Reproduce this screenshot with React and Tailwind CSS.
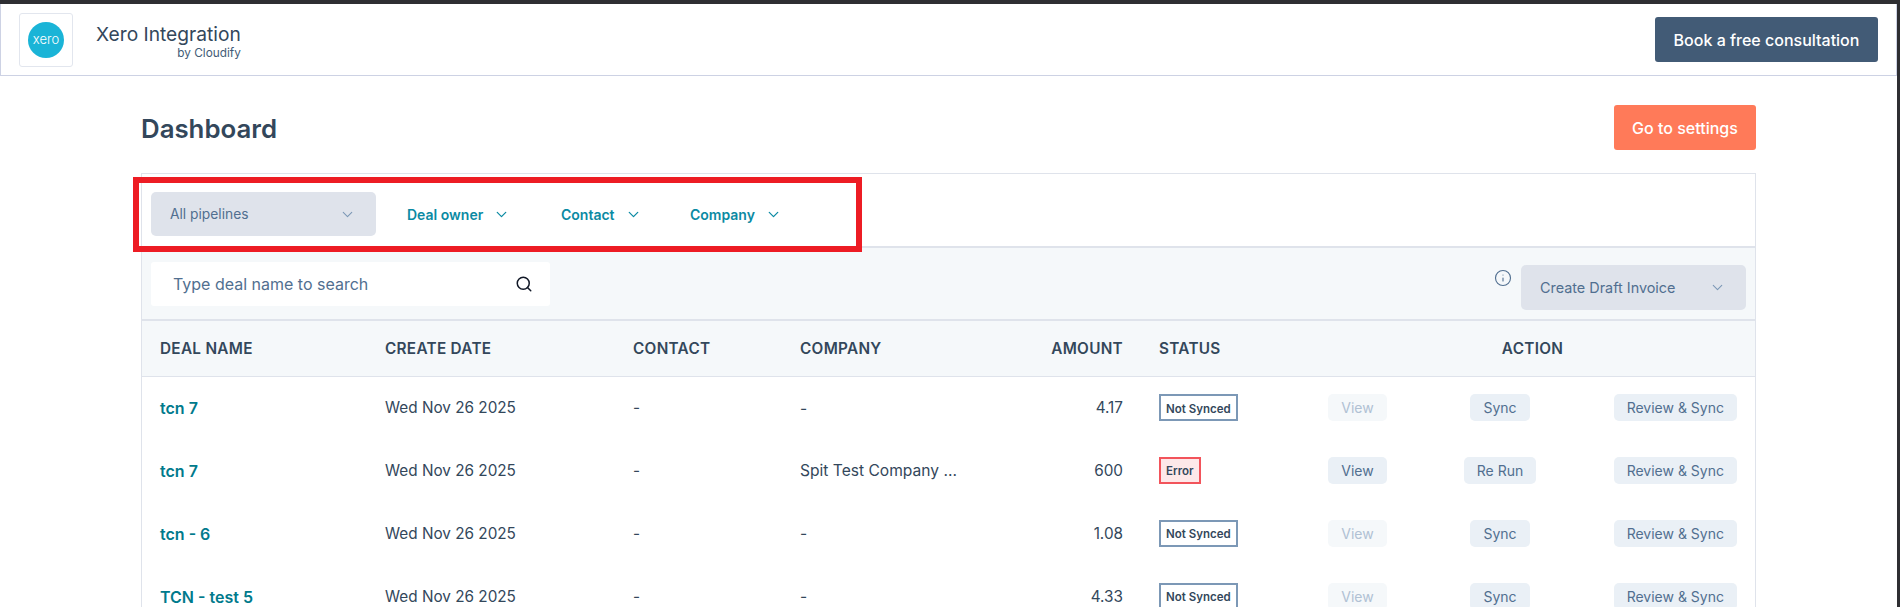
import { ChevronDown, Info, Search } from 'lucide-react';

const deals = [
  { name: 'tcn 7', company: '-', amount: '4.17', status: 'Not Synced', viewOff: true, run: 'Sync' },
  { name: 'tcn 7', company: 'Spit Test Company ...', amount: '600', status: 'Error', viewOff: false, run: 'Re Run' },
  { name: 'tcn - 6', company: '-', amount: '1.08', status: 'Not Synced', viewOff: true, run: 'Sync' },
  { name: 'TCN - test 5', company: '-', amount: '4.33', status: 'Not Synced', viewOff: true, run: 'Sync' },
];

function StatusTag({ status }) {
  if (status === 'Error') {
    return (
      <span className="inline-flex h-[27px] items-center border-2 border-[#f2545b] bg-[#fde8e9] px-[5px] pt-[3px] text-[11.5px] font-semibold text-[#33475b]">
        {status}
      </span>
    );
  }
  return (
    <span className="inline-flex h-[27px] items-center border-2 border-[#7c98b6] bg-white px-[5px] pt-[3px] text-[11.5px] font-semibold text-[#33475b]">
      {status}
    </span>
  );
}

function ActionButton({ children, off }) {
  return (
    <button
      type="button"
      className={
        off
          ? 'h-[27px] w-[59px] rounded-[5px] bg-[#f5f8fa] text-[14px] text-[#b0c1d4]'
          : 'h-[27px] min-w-[59px] rounded-[5px] bg-[#eaf0f6] px-[13px] text-[14px] text-[#516f90]'
      }
    >
      {children}
    </button>
  );
}

function FilterLink({ label, className }) {
  return (
    <button type="button" className={`flex items-center gap-[10px] text-[14px] font-semibold text-[#0b8aa3] ${className}`}>
      {label}
      <ChevronDown size={17} strokeWidth={1.75} />
    </button>
  );
}

export default function App() {
  return (
    <div className="h-[607px] overflow-hidden border-t-4 border-r-[3px] border-[#2e2e32] bg-white font-['Inter','Liberation_Sans',sans-serif] text-[#33475b]">
      <header className="flex h-[72px] items-center justify-between border-x border-b border-[#cdd2e4] pr-[18px] pl-[18px]">
        <div className="flex items-center gap-[23px]">
          <div className="flex h-[54px] w-[54px] items-center justify-center rounded-[3px] border border-[#e2e6ee]">
            <div className="flex h-[36px] w-[36px] items-center justify-center rounded-full bg-[#1ab4d7] text-[13px] font-light text-white">
              xero
            </div>
          </div>
          <div className="mt-[4px] flex flex-col items-end">
            <span className="text-[19.2px] leading-[23px] text-[#33475b]">Xero Integration</span>
            <span className="text-[11.8px] leading-[14px] text-[#425b76]">by Cloudify</span>
          </div>
        </div>
        <button type="button" className="h-[45px] w-[223px] rounded-[3px] bg-[#425b76] text-[16px] font-medium text-white">
          Book a free consultation
        </button>
      </header>

      <main className="mr-[141px] ml-[141px]">
        <div className="flex items-center justify-between pt-[29px] pb-[23px]">
          <h1 className="mt-[3px] text-[25.8px] font-semibold text-[#33475b]">Dashboard</h1>
          <button type="button" className="h-[45px] w-[142px] rounded-[3px] bg-[#ff7a59] text-[16px] font-medium text-white">
            Go to settings
          </button>
        </div>

        <section className="border border-[#dfe3eb]">
          <div className="relative flex h-[72px] items-center pt-[8px] pl-[9px]">
            <button type="button" className="flex h-[44px] w-[225px] items-center justify-between rounded-[5px] bg-[#dfe3eb] pr-[20px] pl-[19px] text-[13.8px] text-[#516f90]">
              All pipelines
              <ChevronDown size={17} strokeWidth={1.5} className="text-[#7c98b6]" />
            </button>
            <FilterLink label="Deal owner" className="ml-[31px] w-[154px]" />
            <FilterLink label="Contact" className="w-[129px]" />
            <FilterLink label="Company" />
            <div className="absolute top-[3px] left-[-9px] h-[75px] w-[729px] border-[6px] border-[#ed1c24]" />
          </div>

          <div className="flex h-[75px] items-center justify-between border-y-2 border-[#dfe3eb] bg-[#f5f8fa] pr-[9px] pl-[9px]">
            <div className="flex h-[44px] w-[399px] items-center justify-between rounded-[3px] bg-white pr-[17px] pl-[22px]">
              <span className="text-[16px] text-[#516f90]">Type deal name to search</span>
              <Search size={18} strokeWidth={2} className="text-[#111827]" />
            </div>
            <div className="mt-[8px] flex items-center gap-[9px]">
              <Info size={18} strokeWidth={1.5} className="mb-[20px] text-[#516f90]" />
              <button type="button" className="flex h-[45px] w-[225px] items-center justify-between rounded-[5px] bg-[#dfe3eb] pr-[20px] pl-[19px] text-[14.4px] text-[#516f90]">
                Create Draft Invoice
                <ChevronDown size={17} strokeWidth={1.5} className="text-[#7c98b6]" />
              </button>
            </div>
          </div>

          <table className="w-full table-fixed border-collapse">
            <colgroup>
              <col className="w-[225px]" />
              <col className="w-[248px]" />
              <col className="w-[167px]" />
              <col className="w-[218px]" />
              <col className="w-[141px]" />
              <col className="w-[169px]" />
              <col className="w-[99px]" />
              <col className="w-[182px]" />
              <col />
            </colgroup>
            <thead>
              <tr className="h-[55px] border-b border-[#dfe3eb] bg-[#f5f8fa] text-[15.3px] font-semibold tracking-[0.3px] text-[#33475b]">
                <th className="pt-[2px] pl-[18px] text-left font-semibold">DEAL NAME</th>
                <th className="pt-[2px] pl-[18px] text-left font-semibold">CREATE DATE</th>
                <th className="pt-[2px] pl-[18px] text-left font-semibold">CONTACT</th>
                <th className="pt-[2px] pl-[18px] text-left font-semibold">COMPANY</th>
                <th className="pt-[2px] pr-[18px] text-right font-semibold">AMOUNT</th>
                <th className="pt-[2px] pl-[18px] text-left font-semibold">STATUS</th>
                <th colSpan={3} className="pt-[2px] text-center font-semibold">ACTION</th>
              </tr>
            </thead>
            <tbody className="text-[15.3px]">
              {deals.map((deal, index) => (
                <tr key={index} className="h-[63px]">
                  <td className="pl-[18px] text-[16px] font-semibold text-[#007a8c]">{deal.name}</td>
                  <td className="pt-[2px] pl-[18px]">Wed Nov 26 2025</td>
                  <td className="pt-[2px] pl-[18px]">-</td>
                  <td className="pt-[1px] pl-[18px] text-[15.6px]">{deal.company}</td>
                  <td className="pt-[2px] pr-[18px] text-right">{deal.amount}</td>
                  <td className="pl-[18px]"><StatusTag status={deal.status} /></td>
                  <td className="pl-[18px]"><ActionButton off={deal.viewOff}>View</ActionButton></td>
                  <td className="text-center"><ActionButton>{deal.run}</ActionButton></td>
                  <td className="pr-[18px] text-right"><ActionButton>Review &amp; Sync</ActionButton></td>
                </tr>
              ))}
            </tbody>
          </table>
        </section>
      </main>
    </div>
  );
}
